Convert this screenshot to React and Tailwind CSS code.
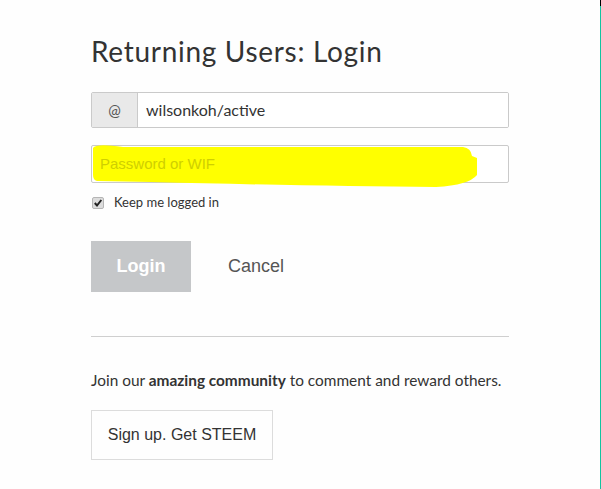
import React from "react";

export default function App() {
  return (
    <div className="flex w-full h-[489px] bg-[#fefefe] overflow-hidden">
      <div className="flex-1 pl-[91px] pr-[91px] pt-[33px]">
        <h1 className="text-[28px] leading-[36px] tracking-[0.7px] text-[#333] font-['Lato',sans-serif] font-normal">
          Returning Users: Login
        </h1>
        <div className="mt-[23px] flex h-[36px] w-[418px] border border-[#cacaca] rounded-[2px] overflow-hidden">
          <div className="w-[46px] bg-[#e9e9e9] border-r border-[#cacaca] flex items-center justify-center text-[15px] text-[#555] font-['Lato',sans-serif]">
            @
          </div>
          <div className="flex-1 bg-white flex items-center pl-[8px] text-[16px] text-[#333] font-['Lato',sans-serif]">
            wilsonkoh/active
          </div>
        </div>
        <div className="relative mt-[17px] h-[38px] w-[418px] border border-[#cacaca] rounded-[2px] bg-white">
          <svg className="absolute left-[-1px] top-[-1px]" width="400" height="46" viewBox="0 0 400 46">
            <path
              d="M2,3 Q5,-2 32,2 L372,2 Q380,3 381,11 L386,13 L386,30 Q378,40 345,42 Q220,41 60,37 L6,36 Q2,35 2,30 Z"
              fill="#ffff00"
            />
          </svg>
          <div className="absolute left-[8px] top-0 h-full flex items-center text-[15px] text-[#cfcf00] font-['Liberation_Sans',sans-serif]">
            Password or WIF
          </div>
        </div>
        <label className="mt-[12px] flex items-center h-[16px]">
          <span className="w-[12px] h-[12px] ml-[1px] rounded-[2px] bg-[#dcdcdc] border border-[#b5b5b5] flex items-center justify-center">
            <svg width="10" height="10" viewBox="0 0 10 10">
              <path d="M1.8,5 L4,7.5 L8.3,2" stroke="#222" strokeWidth="2" fill="none" />
            </svg>
          </span>
          <span className="ml-[10px] text-[13px] text-[#333] font-['Lato',sans-serif]">Keep me logged in</span>
        </label>
        <div className="mt-[30px] flex items-center">
          <div className="w-[100px] h-[51px] bg-[#c5c7c9] flex items-center justify-center text-white font-bold text-[18px] font-['Liberation_Sans',sans-serif]">
            Login
          </div>
          <div className="ml-[37px] text-[18px] text-[#555] font-['Liberation_Sans',sans-serif]">Cancel</div>
        </div>
        <div className="mt-[44px] w-[418px] h-px bg-[#cfcfcf]" />
        <p className="mt-[33px] text-[15.4px] leading-[20px] text-[#333] font-['Lato',sans-serif]">
          Join our <b className="font-bold">amazing community</b> to comment and reward others.
        </p>
        <div className="mt-[20px] inline-flex w-[182px] h-[50px] border border-[#dcdcdc] items-center justify-center text-[16px] text-[#333] font-['Liberation_Sans',sans-serif]">
          Sign up. Get STEEM
        </div>
      </div>
      <div className="w-px flex flex-col">
        <div className="h-[6px] bg-black" />
        <div className="flex-1 bg-[#12c4a0]" />
      </div>
    </div>
  );
}
